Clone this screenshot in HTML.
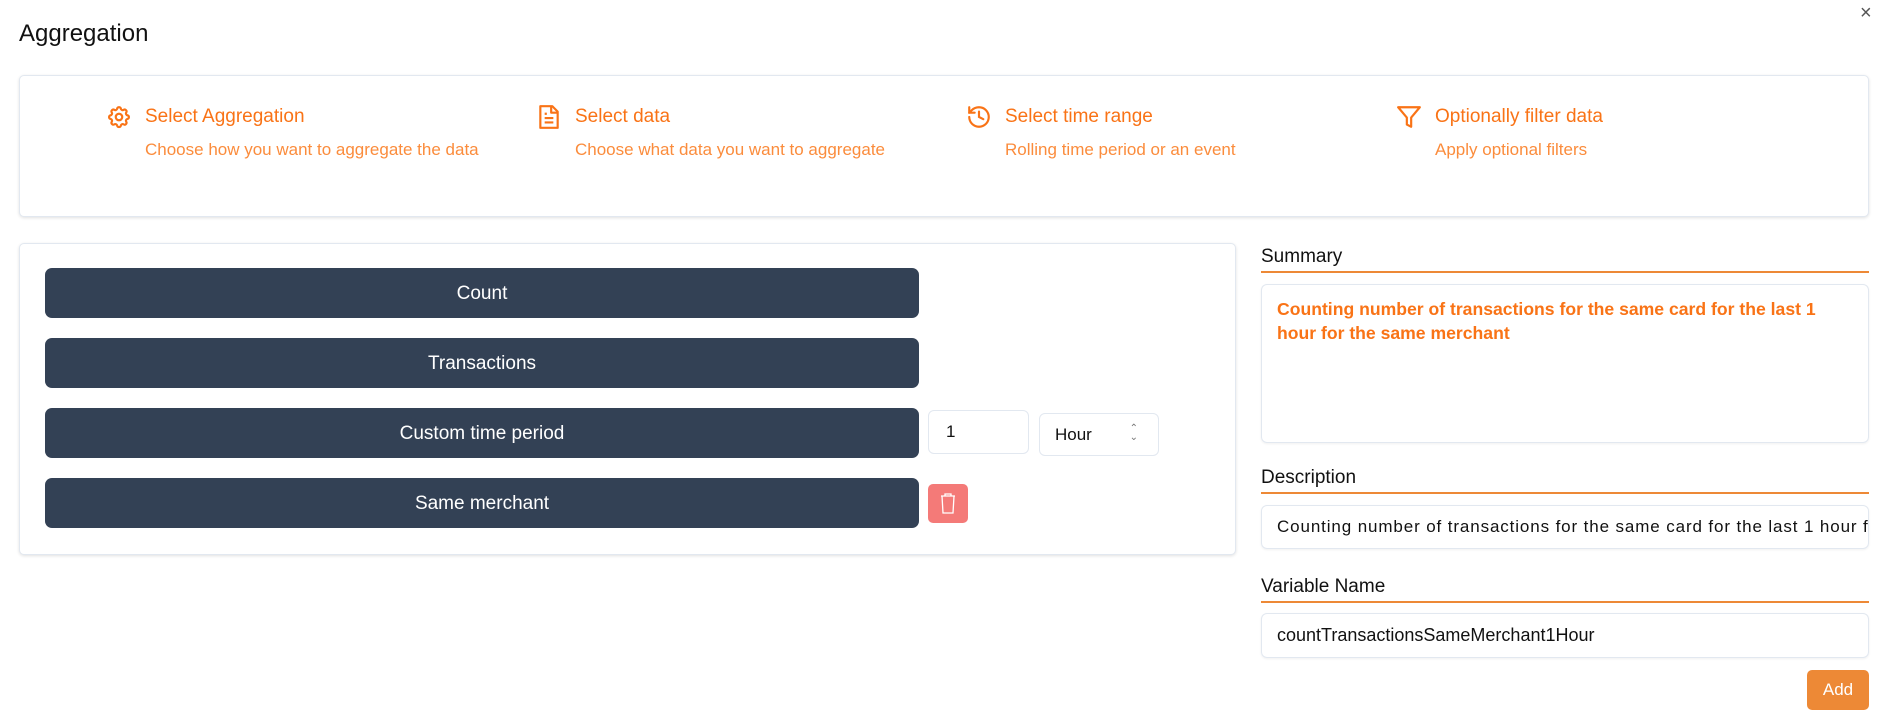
<!DOCTYPE html>
<html><head><meta charset="utf-8"><style>
*{box-sizing:border-box;margin:0;padding:0}
body{width:1893px;height:724px;background:#fff;font-family:"Liberation Sans",sans-serif;position:relative;overflow:hidden;color:#111}
.a{position:absolute}
.card{position:absolute;border:1px solid #e2e8f0;border-radius:5px;box-shadow:0 1px 3px rgba(0,0,0,.12);background:#fff}
.st{position:absolute;color:#f97316}
.st .t{position:absolute;left:37px;top:1px;font-size:19px;white-space:nowrap;line-height:22px}
.st .s{position:absolute;left:37px;top:35px;font-size:17px;white-space:nowrap;color:#fb8c3c}
.st svg{position:absolute;left:-2px;top:-1px}
.btn{position:absolute;left:45px;width:874px;height:50px;background:#334155;border-radius:7px;color:#fff;font-size:19px;text-align:center;line-height:52px}
.lbl{position:absolute;left:1261px;font-size:19px;color:#111}
.line{position:absolute;left:1261px;width:608px;height:2px;background:#ed8936}
.inp{position:absolute;left:1261px;width:608px;border:1px solid #e2e8f0;border-radius:6px;box-shadow:0 1px 2px rgba(0,0,0,.06);font-size:17px;padding-left:15px;white-space:nowrap;overflow:hidden}
</style></head><body>
<div class="a" style="left:19px;top:20px;font-size:24px">Aggregation</div>
<div class="a" style="left:1860px;top:2px;font-size:20px;color:#555">×</div>
<div class="card" style="left:19px;top:75px;width:1850px;height:142px"></div>
<div class="st" style="left:108px;top:105px">
<svg width="26" height="26" viewBox="0 0 24 24" fill="none" stroke="#f97316" stroke-width="2" stroke-linejoin="round"><path d="M10.3 4.3c.4-1.8 3-1.8 3.4 0a1.7 1.7 0 002.6 1.1c1.5-.9 3.4.8 2.4 2.4a1.7 1.7 0 001.1 2.6c1.8.4 1.8 3 0 3.4a1.7 1.7 0 00-1.1 2.6c.9 1.5-.8 3.4-2.4 2.4a1.7 1.7 0 00-2.6 1.1c-.4 1.8-3 1.8-3.4 0a1.7 1.7 0 00-2.6-1.1c-1.5.9-3.4-.8-2.4-2.4a1.7 1.7 0 00-1.1-2.6c-1.8-.4-1.8-3 0-3.4a1.7 1.7 0 001.1-2.6c-.9-1.5.8-3.4 2.4-2.4a1.7 1.7 0 002.6-1.1z"/><circle cx="12" cy="12" r="3"/></svg>
<div class="t">Select Aggregation</div><div class="s">Choose how you want to aggregate the data</div></div>
<div class="st" style="left:538px;top:105px">
<svg width="26" height="26" viewBox="0 0 24 24" fill="none" stroke="#f97316" stroke-width="2" stroke-linejoin="round"><path d="M6 2h9l5 5v15H4V2z" /><path d="M14 2v6h6M8 13h8M8 17h8M8 9h2"/></svg>
<div class="t">Select data</div><div class="s">Choose what data you want to aggregate</div></div>
<div class="st" style="left:968px;top:105px">
<svg width="26" height="26" viewBox="0 0 24 24" fill="none" stroke="#f97316" stroke-width="2" stroke-linecap="round"><path d="M3 12a9 9 0 109-9 9.75 9.75 0 00-6.74 2.74L3 8"/><path d="M3 3v5h5M12 7v5l4 2"/></svg>
<div class="t">Select time range</div><div class="s">Rolling time period or an event</div></div>
<div class="st" style="left:1398px;top:105px">
<svg width="26" height="26" viewBox="0 0 24 24" fill="none" stroke="#f97316" stroke-width="2" stroke-linejoin="round"><path d="M2 3h20l-8 9.5V21l-4-2v-6.5z"/></svg>
<div class="t">Optionally filter data</div><div class="s">Apply optional filters</div></div>

<div class="card" style="left:19px;top:243px;width:1217px;height:312px"></div>
<div class="btn" style="top:268px">Count</div>
<div class="btn" style="top:338px">Transactions</div>
<div class="btn" style="top:408px">Custom time period</div>
<div class="btn" style="top:478px">Same merchant</div>
<div class="a" style="left:928px;top:410px;width:101px;height:44px;border:1px solid #e2e8f0;border-radius:6px;font-size:17px;padding:11px 0 0 17px">1</div>
<div class="a" style="left:1039px;top:413px;width:120px;height:43px;border:1px solid #e2e8f0;border-radius:6px;font-size:17px;padding:11px 0 0 15px">Hour<span style="position:absolute;right:20px;top:10px;font-size:10px;color:#777;line-height:9px">⌃<br>⌄</span></div>
<div class="a" style="left:928px;top:484px;width:40px;height:39px;background:#f47a78;border-radius:5px">
<svg width="40" height="39" viewBox="0 0 40 39" fill="none" stroke="#fff" stroke-width="1.3"><path d="M13 12h14M17 12v-2h6v2M14 12l1 17h10l1-17"/></svg></div>

<div class="lbl" style="top:246px">Summary</div>
<div class="line" style="top:271px"></div>
<div class="inp" style="top:284px;height:159px;white-space:normal;padding:12px 30px 0 15px;color:#f97316;font-weight:bold;font-size:17.6px;line-height:24px">Counting number of transactions for the same card for the last 1 hour for the same merchant</div>
<div class="lbl" style="top:467px">Description</div>
<div class="line" style="top:492px"></div>
<div class="inp" style="top:505px;height:44px;line-height:42px;letter-spacing:0.88px">Counting number of transactions for the same card for the last 1 hour for the same merchant</div>
<div class="lbl" style="top:576px">Variable Name</div>
<div class="line" style="top:601px"></div>
<div class="inp" style="top:613px;height:45px;line-height:43px;font-size:18px">countTransactionsSameMerchant1Hour</div>
<div class="a" style="left:1807px;top:670px;width:62px;height:40px;background:#ed8936;border-radius:5px;color:#fff;font-size:17px;text-align:center;line-height:40px">Add</div>
</body></html>
